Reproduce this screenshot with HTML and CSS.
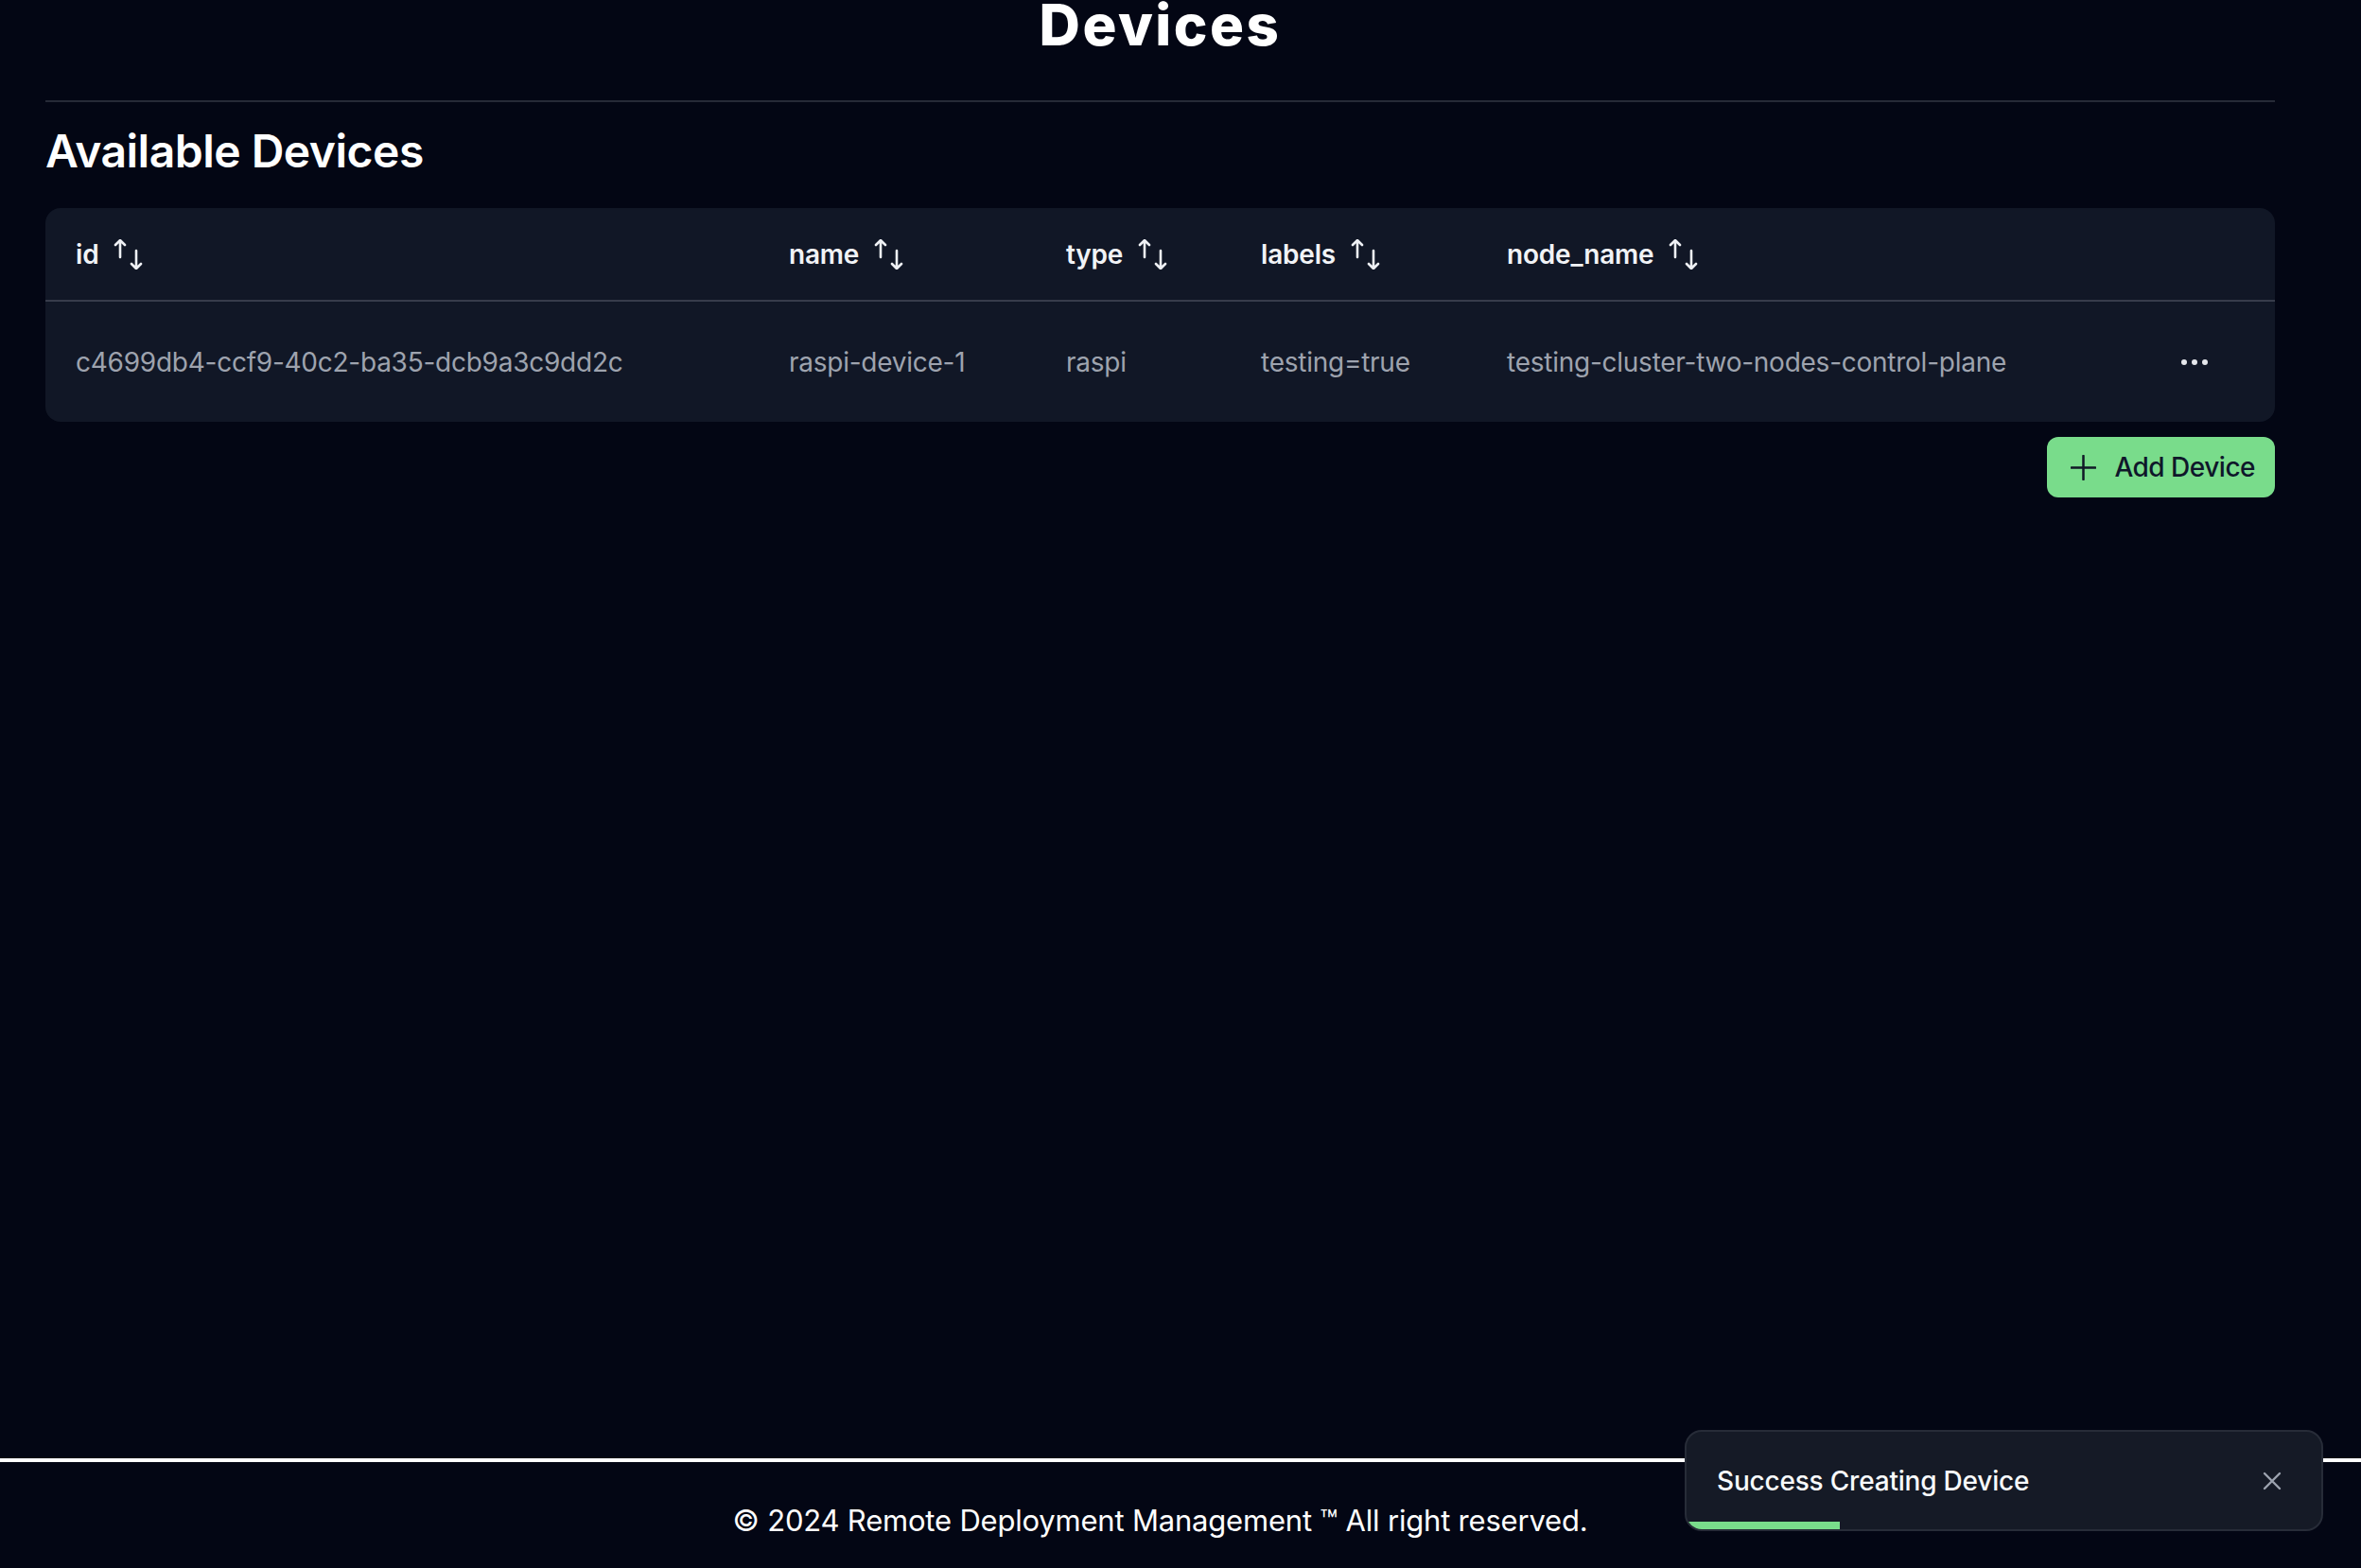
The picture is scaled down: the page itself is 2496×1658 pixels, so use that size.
FILE: index.html
```html
<!DOCTYPE html>
<html lang="en">
<head>
<meta charset="utf-8">
<title>Devices</title>
<link rel="stylesheet" href="styles.css">
</head>
<body>
<main class="page">
  <header class="page-header">
    <h1 class="page-title">Devices</h1>
  </header>
  <h2 class="section-title">Available Devices</h2>
  <div class="table-card">
    <table class="devices-table">
      <colgroup>
        <col class="col-id"><col class="col-name"><col class="col-type"><col class="col-labels"><col class="col-node"><col class="col-actions">
      </colgroup>
      <thead>
        <tr>
          <th><span class="th-inner">id<svg class="sort-icon" viewBox="0 0 32 32"><path d="M7 1V19M2 6L7 1L12 6"/><path d="M24 12V31M19 26L24 31L29 26"/></svg></span></th>
          <th><span class="th-inner">name<svg class="sort-icon" viewBox="0 0 32 32"><path d="M7 1V19M2 6L7 1L12 6"/><path d="M24 12V31M19 26L24 31L29 26"/></svg></span></th>
          <th><span class="th-inner">type<svg class="sort-icon" viewBox="0 0 32 32"><path d="M7 1V19M2 6L7 1L12 6"/><path d="M24 12V31M19 26L24 31L29 26"/></svg></span></th>
          <th><span class="th-inner">labels<svg class="sort-icon" viewBox="0 0 32 32"><path d="M7 1V19M2 6L7 1L12 6"/><path d="M24 12V31M19 26L24 31L29 26"/></svg></span></th>
          <th><span class="th-inner">node_name<svg class="sort-icon" viewBox="0 0 32 32"><path d="M7 1V19M2 6L7 1L12 6"/><path d="M24 12V31M19 26L24 31L29 26"/></svg></span></th>
          <th></th>
        </tr>
      </thead>
      <tbody>
        <tr>
          <td>c4699db4-ccf9-40c2-ba35-dcb9a3c9dd2c</td>
          <td>raspi-device-1</td>
          <td>raspi</td>
          <td>testing=true</td>
          <td>testing-cluster-two-nodes-control-plane</td>
          <td class="actions-cell">
            <button class="more-btn" aria-label="More actions">
              <svg class="more-icon" viewBox="0 0 30 8"><circle cx="4" cy="4" r="3"/><circle cx="15" cy="4" r="3"/><circle cx="26" cy="4" r="3"/></svg>
            </button>
          </td>
        </tr>
      </tbody>
    </table>
  </div>
  <div class="toolbar">
    <button class="add-btn">
      <svg class="plus-icon" viewBox="0 0 28 28"><path d="M14 1V27M1 14H27"/></svg>
      <span>Add Device</span>
    </button>
  </div>
</main>
<footer class="site-footer">
  <p class="footer-text">© 2024 Remote Deployment Management ™ All right reserved.</p>
</footer>
<div class="toast" role="status">
  <div class="toast-body">
    <span class="toast-text">Success Creating Device</span>
    <svg class="close-icon" viewBox="0 0 20 20"><path d="M2 2L18 18M18 2L2 18"/></svg>
  </div>
  <div class="toast-progress"></div>
</div>
</body>
</html>
```

FILE: styles.css
```css
* { box-sizing: border-box; }

html, body {
  margin: 0;
  padding: 0;
}

body {
  background: #030614;
  color: #f3f4f6;
  font-family: Inter, "Noto Sans", "Liberation Sans", sans-serif;
  min-height: 100vh;
  display: flex;
  flex-direction: column;
  overflow: hidden;
}

.page {
  flex: 1;
  padding: 0 91px 0 48px;
}

.page-header {
  padding-bottom: 44px;
  border-bottom: 2px solid #262a37;
}

.page-title {
  margin: -10px 0 0;
  font-size: 60px;
  line-height: 72px;
  font-weight: 800;
  text-align: center;
  color: #ffffff;
  letter-spacing: 2.5px;
}

.section-title {
  margin: 20px 0 0;
  font-size: 48px;
  line-height: 64px;
  font-weight: 600;
  color: #ffffff;
  letter-spacing: -0.5px;
}

.table-card {
  margin-top: 28px;
  background: #111726;
  border-radius: 16px;
  overflow: hidden;
}

.devices-table {
  width: 100%;
  table-layout: fixed;
  border-collapse: collapse;
}

.col-id { width: 754px; }
.col-name { width: 293px; }
.col-type { width: 206px; }
.col-labels { width: 260px; }
.col-node { width: 695px; }
.col-actions { width: 149px; }

.devices-table th {
  height: 98px;
  padding: 0 32px;
  text-align: left;
  font-size: 28px;
  line-height: 40px;
  font-weight: 600;
  color: #f1f3f6;
  border-bottom: 2px solid #373c4b;
  vertical-align: middle;
  letter-spacing: -0.2px;
}

.th-inner {
  display: inline-flex;
  align-items: center;
}

.sort-icon {
  width: 32px;
  height: 32px;
  margin-left: 16px;
  fill: none;
  stroke: #eef0f4;
  stroke-width: 2.6;
  stroke-linecap: round;
  stroke-linejoin: round;
}

.devices-table td {
  height: 128px;
  padding: 0 32px;
  font-size: 28px;
  line-height: 40px;
  font-weight: 400;
  color: #9ea3ae;
  white-space: nowrap;
  vertical-align: middle;
  letter-spacing: -0.25px;
}

.devices-table td.actions-cell {
  padding: 0 32px;
}

.more-btn {
  width: 64px;
  height: 64px;
  padding: 0;
  border: 0;
  background: transparent;
  display: flex;
  align-items: center;
  justify-content: center;
  cursor: pointer;
}

.more-icon {
  width: 30px;
  height: 8px;
  fill: #e5e7eb;
}

.toolbar {
  display: flex;
  justify-content: flex-end;
  margin-top: 16px;
}

.add-btn {
  display: inline-flex;
  align-items: center;
  gap: 19px;
  height: 64px;
  padding: 0 21px 0 25px;
  border: 0;
  border-radius: 12px;
  background: #79dc8b;
  color: #0f172a;
  font-family: Inter, "Noto Sans", "Liberation Sans", sans-serif;
  font-size: 28px;
  font-weight: 500;
  letter-spacing: -0.5px;
  cursor: pointer;
}

.plus-icon {
  width: 27px;
  height: 27px;
  fill: none;
  stroke: #111827;
  stroke-width: 2.6;
  stroke-linecap: round;
}

.site-footer {
  border-top: 4px solid #ffffff;
  padding: 38px 43px 26px 0;
}

.footer-text {
  margin: 0;
  text-align: center;
  font-size: 31px;
  line-height: 48px;
  color: #ffffff;
  letter-spacing: -0.2px;
}

.toast {
  position: absolute;
  left: 1781px;
  top: 1512px;
  width: 675px;
  height: 107px;
  background: #151a26;
  border: 2px solid #272c38;
  border-radius: 18px;
  overflow: hidden;
  display: flex;
  flex-direction: column;
}

.toast-body {
  flex: 1;
  display: flex;
  align-items: center;
  justify-content: space-between;
  padding: 9px 42px 0 32px;
}

.toast-text {
  font-size: 28px;
  font-weight: 500;
  color: #f8fafc;
  letter-spacing: -0.2px;
}

.close-icon {
  width: 20px;
  height: 20px;
  fill: none;
  stroke: #9ca3af;
  stroke-width: 2.4;
  stroke-linecap: round;
}

.toast-progress {
  width: 162px;
  height: 8px;
  background: #79dc8b;
}
```
